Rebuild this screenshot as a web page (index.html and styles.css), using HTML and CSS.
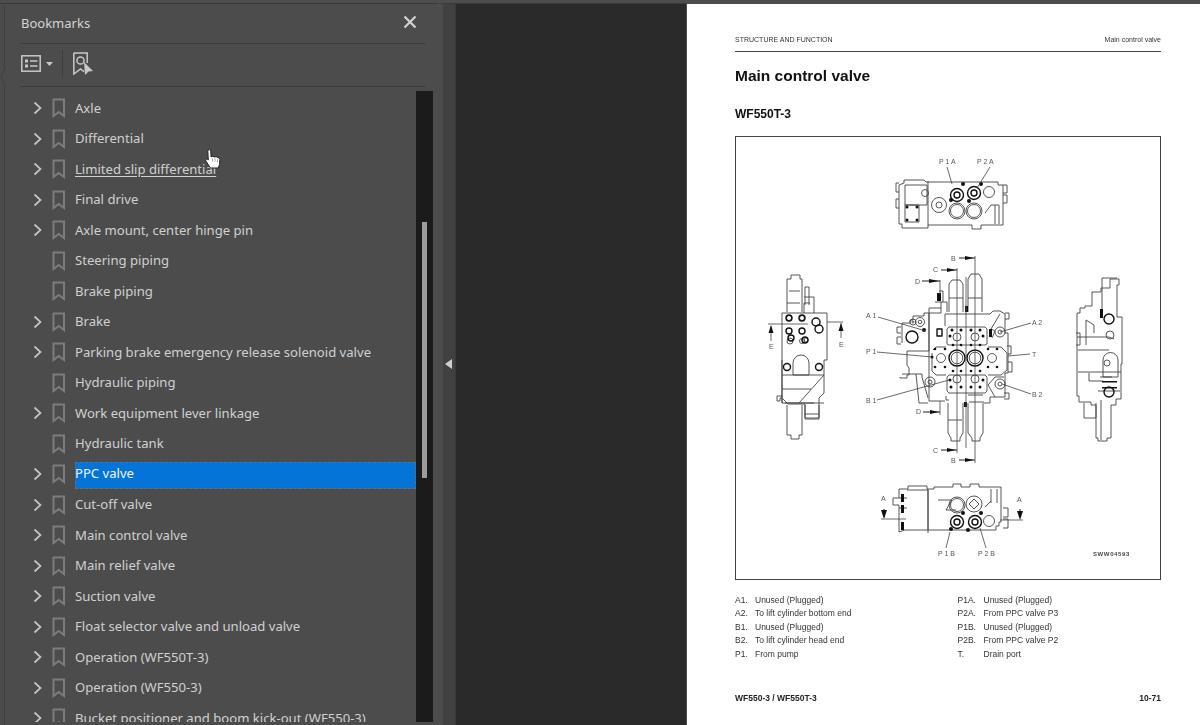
FILE: index.html
```html
<!DOCTYPE html>
<html lang="en">
<head>
<meta charset="utf-8">
<title>Bookmarks</title>
<link rel="stylesheet" href="styles.css">
</head>
<body>
<svg class="defs" width="0" height="0" aria-hidden="true">
  <symbol id="chev" viewBox="0 0 12 14"><path d="M2.500 1.500 8.500 7l-6 5.500" fill="none" stroke="#c4c4c4" stroke-width="1.700"/></symbol>
  <symbol id="mark" viewBox="0 0 14 20"><path d="M1.500 1.500h10.500v16.500L6.750 14 1.500 18Z" fill="none" stroke="#7c7c7c" stroke-width="2"/></symbol>
</svg>
<div class="app">
  <div class="edge"><svg class="notch" viewBox="0 0 6 20" width="6" height="20"><path d="M5.500 0 1 10l4.500 10" fill="#4b4b4b" stroke="#404040"/></svg></div>
  <aside class="panel">
    <header class="panel-head">
      <h1 class="panel-title">Bookmarks</h1>
      <svg class="close" viewBox="0 0 14 14" width="14" height="14"><path d="M1.500 1.500 12.500 12.500M12.500 1.500 1.500 12.500" stroke="#d2d2d2" stroke-width="2.200"/></svg>
    </header>
    <div class="toolbar">
      <svg class="tool-list" viewBox="0 0 20 17" width="20" height="17"><rect x=".8" y=".8" width="18.400" height="15.400" fill="none" stroke="#c8c8c8" stroke-width="1.500"/><rect x="4" y="4.500" width="3" height="3" fill="#c8c8c8"/><rect x="4" y="9.500" width="3" height="3" fill="#c8c8c8"/><path d="M9 6h7.500M9 11h7.500" stroke="#c8c8c8" stroke-width="1.500"/></svg>
      <svg class="caret" viewBox="0 0 7 4" width="7" height="4"><path d="M0 0h7L3.500 4Z" fill="#c8c8c8"/></svg>
      <span class="tool-sep"></span>
      <svg class="tool-find" viewBox="0 0 21 23" width="21" height="23"><path d="M1.800 1h13.400v10M1.800 1v21l6.700-5 3.500 2.600" fill="none" stroke="#c8c8c8" stroke-width="1.500"/><circle cx="8.500" cy="8.500" r="3.600" fill="none" stroke="#c8c8c8" stroke-width="1.500"/><path d="M12 10 21 19l-4.500.5L13 23Z" fill="#c8c8c8"/></svg>
    </div>
    <div class="tree-wrap">
      <ul class="tree">
        <li class="row"><svg class="chev"><use href="#chev"/></svg><svg class="mark"><use href="#mark"/></svg><span class="label">Axle</span></li>
        <li class="row"><svg class="chev"><use href="#chev"/></svg><svg class="mark"><use href="#mark"/></svg><span class="label">Differential</span></li>
        <li class="row"><svg class="chev"><use href="#chev"/></svg><svg class="mark"><use href="#mark"/></svg><span class="label underlined">Limited slip differential</span></li>
        <li class="row"><svg class="chev"><use href="#chev"/></svg><svg class="mark"><use href="#mark"/></svg><span class="label">Final drive</span></li>
        <li class="row"><svg class="chev"><use href="#chev"/></svg><svg class="mark"><use href="#mark"/></svg><span class="label">Axle mount, center hinge pin</span></li>
        <li class="row leaf"><svg class="mark"><use href="#mark"/></svg><span class="label">Steering piping</span></li>
        <li class="row leaf"><svg class="mark"><use href="#mark"/></svg><span class="label">Brake piping</span></li>
        <li class="row"><svg class="chev"><use href="#chev"/></svg><svg class="mark"><use href="#mark"/></svg><span class="label">Brake</span></li>
        <li class="row"><svg class="chev"><use href="#chev"/></svg><svg class="mark"><use href="#mark"/></svg><span class="label">Parking brake emergency release solenoid valve</span></li>
        <li class="row leaf"><svg class="mark"><use href="#mark"/></svg><span class="label">Hydraulic piping</span></li>
        <li class="row"><svg class="chev"><use href="#chev"/></svg><svg class="mark"><use href="#mark"/></svg><span class="label">Work equipment lever linkage</span></li>
        <li class="row leaf"><svg class="mark"><use href="#mark"/></svg><span class="label">Hydraulic tank</span></li>
        <li class="row"><svg class="chev"><use href="#chev"/></svg><svg class="mark"><use href="#mark"/></svg><span class="label selected">PPC valve</span></li>
        <li class="row"><svg class="chev"><use href="#chev"/></svg><svg class="mark"><use href="#mark"/></svg><span class="label">Cut-off valve</span></li>
        <li class="row"><svg class="chev"><use href="#chev"/></svg><svg class="mark"><use href="#mark"/></svg><span class="label">Main control valve</span></li>
        <li class="row"><svg class="chev"><use href="#chev"/></svg><svg class="mark"><use href="#mark"/></svg><span class="label">Main relief valve</span></li>
        <li class="row"><svg class="chev"><use href="#chev"/></svg><svg class="mark"><use href="#mark"/></svg><span class="label">Suction valve</span></li>
        <li class="row"><svg class="chev"><use href="#chev"/></svg><svg class="mark"><use href="#mark"/></svg><span class="label">Float selector valve and unload valve</span></li>
        <li class="row"><svg class="chev"><use href="#chev"/></svg><svg class="mark"><use href="#mark"/></svg><span class="label">Operation (WF550T-3)</span></li>
        <li class="row"><svg class="chev"><use href="#chev"/></svg><svg class="mark"><use href="#mark"/></svg><span class="label">Operation (WF550-3)</span></li>
        <li class="row"><svg class="chev"><use href="#chev"/></svg><svg class="mark"><use href="#mark"/></svg><span class="label">Bucket positioner and boom kick-out (WF550-3)</span></li>
      </ul>
      <div class="scrollbar"><div class="thumb"></div></div>
      <svg class="cursor" viewBox="0 0 16 20" width="16" height="20"><path d="M2.800 1.500c.8-1 2.700-1 3 .4l.2 6 1.800-.6 1.700.7 1.600-.3 1.500.9 1.500.2.800 1.700-.4 5-1.300 3.500H5.500L.8 12c-.7-1.200.6-2.600 1.800-1.700l.7.6Z" fill="#fff" stroke="#222" stroke-width="1"/><path d="M7.500 9.500v3M10 9.500v3M12.500 10v3" stroke="#888" stroke-width=".7"/></svg>
    </div>
  </aside>
  <div class="handle"><svg viewBox="0 0 7 10" width="7" height="10"><path d="M7 0v10L0 5Z" fill="#cfcfcf"/></svg></div>
  <div class="gutter"></div>
  <main class="page">
    <div class="page-head"><span>STRUCTURE AND FUNCTION</span><span>Main control valve</span></div>
    <h2 class="page-title">Main control valve</h2>
    <h3 class="page-sub">WF550T-3</h3>
    <div class="figure">
      <svg class="drawing" viewBox="736 137 424 442" width="424" height="442">
        <!-- top view -->
        <g class="ln">
          <path d="M899 185v39h3v4h26v-3h44v4h9v-4h22v-40h-5v-3h-72l-2-2h-20v3Z"/>
          <path d="M928 181v44M905 185h22v20h-22ZM905 205h14v17h-14ZM899 183h-3v9h3M899 199h-3v9h3M1003 185h4v8h-4M1003 195h4v8h-4"/>
          <circle cx="925" cy="193" r="3.500"/><circle cx="939" cy="205" r="7.500"/><circle cx="939" cy="205" r="3"/>
          <circle cx="974" cy="211" r="8"/><circle cx="974" cy="211" r="6.500"/><circle cx="957" cy="211" r="8"/><circle cx="957" cy="211" r="6.500"/>
          <circle cx="989" cy="192" r="5.500"/><path d="M991 205h8v19M995 205v19M985 213l6-8"/>
        </g>
        <g class="hv">
          <circle cx="957" cy="195" r="6.500"/><circle cx="957" cy="195" r="3"/><circle cx="974" cy="193" r="6.500"/><circle cx="974" cy="193" r="3"/>
        </g>
        <g class="dk">
          <circle cx="907" cy="207" r="1.500"/><circle cx="917" cy="207" r="1.500"/><circle cx="907" cy="220" r="1.500"/><circle cx="917" cy="220" r="1.500"/>
          <circle cx="963" cy="184" r="2"/><circle cx="981" cy="184" r="2"/><circle cx="951" cy="200" r="2"/><circle cx="969" cy="201" r="2"/>
        </g>
        <g class="thin"><path d="M947 167 952 184M990 167 977 188"/></g>
        <text class="lb" x="939" y="164">P 1 A</text><text class="lb" x="977" y="164">P 2 A</text>

        <!-- bottom view -->
        <g class="ln">
          <path d="M899 532v-27h-6v-7h6v-9h9v-3h19v3h7v-2h19v-3h8v3h9v-3h9v3h22v35h-2v4h-3v4H905Z"/>
          <path d="M928 489v44M907 490h21v40M899 498h8M899 508h8M1003 508h5v9h-5M1003 519h5v9h-5M938 500h14l-6 10h10"/>
          <circle cx="957" cy="505" r="8"/><circle cx="957" cy="505" r="6.500"/><circle cx="974" cy="504" r="8"/><path d="M974 499l5 5-5 5-5-5Z"/>
          <circle cx="989" cy="521" r="5.500"/><path d="M991 489v14M997 489v14M985 507l6-6"/>
        </g>
        <g class="hv">
          <circle cx="957" cy="522" r="6.500"/><circle cx="957" cy="522" r="3"/><circle cx="975" cy="522" r="6.500"/><circle cx="975" cy="522" r="3"/>
        </g>
        <g class="dk">
          <circle cx="963" cy="513" r="2"/><circle cx="981" cy="513" r="2"/><circle cx="951" cy="529" r="2"/><circle cx="968" cy="530" r="2"/>
          <rect x="901" y="494" width="3" height="8"/><rect x="901" y="505" width="3" height="8"/><rect x="901" y="522" width="3" height="8"/>
        </g>
        <g class="thin"><path d="M881 519h25M1000 520h23M946 548 950 532M986 548 980 528"/></g>
        <path class="ar" d="M884 509v8M1020 509v8"/><path class="fillar" d="M881 510h6l-3 9ZM1017 511h6l-3 9Z"/>
        <text class="lb" x="881" y="501">A</text><text class="lb" x="1017" y="502">A</text>
        <text class="lb" x="938" y="556">P 1 B</text><text class="lb" x="978" y="556">P 2 B</text>
        <text class="code" x="1093" y="556">SWW04593</text>

        <!-- left view -->
        <g class="ln">
          <path d="M782 313h45v47h-3v33l-5 5v20h-14v-14h-17l-6-6h-2v3h-3v-5h5v0h-1l1 0M782 313v90M782 360v43h42"/>
          <path d="M787 312v-33h4v-4h9v4h2v33M789 291h11M787 303h13M804 313v-10h6M805 305v-18h4v18M814 313v-16M804 297h10"/>
          <path d="M787 405v30h4v4h8v-4h3v-30M785 403h29M805 405v14h14v-14M805 414h14M782 375h42M782 389h29M824 375l-25 28"/>
          <circle cx="789" cy="318" r="2.500"/><circle cx="802" cy="318" r="2.500"/><circle cx="790" cy="341" r="3"/><circle cx="802" cy="341" r="2.500"/><circle cx="806" cy="340" r="2"/>
          <path d="M793 363a8 8 0 0 1 16 0v12h-16Z"/>
        </g>
        <g class="hv">
          <circle cx="789" cy="318" r="3"/><circle cx="802" cy="318" r="3"/><circle cx="816" cy="322" r="4"/><circle cx="819" cy="329" r="4"/>
          <circle cx="789" cy="331" r="3"/><circle cx="802" cy="331" r="3"/><circle cx="791" cy="338" r="3"/><circle cx="805" cy="340" r="3"/>
          <circle cx="787" cy="367" r="3.500"/><circle cx="819" cy="367" r="3.500"/>
        </g>
        <g class="thin"><path d="M768 324h40M838 322h-11M843 322h-5M771 326v15M841 323v15"/></g>
        <path class="fillar" d="M768.500 333h5l-2.500-8ZM838.500 331h5l-2.500-8Z"/>
        <text class="lb" x="769" y="349">E</text><text class="lb" x="839" y="347">E</text>

        <!-- right view -->
        <g class="ln">
          <path d="M1077 313h3v-5h5v-2h7v-14h9v-4h9v-9h9v6h-2v32h5v47h-1v35h-5v6h-5v33h-4v3h-9v-3h-2v-33h-5v-3h-12v-6h-2Z"/>
          <path d="M1102 278h15M1102 278v32M1076 333h4v12h-4M1077 337h32l5 2M1078 372h43M1078 350h31M1086 345v-25l8 5v8M1084 403v15h12v-15"/>
          <path d="M1101 400v40M1112 377h-12M1098 391h22M1089 373v8h14M1103 360a7 7 0 0 1 15 0v17h-15Z"/>
          <circle cx="1107" cy="363" r="3"/><circle cx="1110" cy="335" r="4"/>
        </g>
        <g class="hv">
          <circle cx="1109" cy="319" r="5"/><circle cx="1109" cy="392" r="5"/>
        </g>
        <g class="dk"><rect x="1102" y="381" width="15" height="1.500"/><rect x="1102" y="387" width="15" height="1.500"/><rect x="1100" y="309" width="3" height="9"/></g>

        <!-- centre view -->
        <g class="ln">
          <path d="M902 343v-20h8v-3h3v-4h11v-3h5v38h-22v14l2 3v7h-2v3h-7v-1"/>
          <path d="M901 327h-4v6h4M901 337h-4v7h4M902 374h20v3l6 21M916 374l3 29M919 403h9M929 313v88M941 302v11h-12v-5h12M935 302h12v10M939 291h4v11"/>
          <path d="M949 312v-28l3-4h8l3 4v28M949 298h14M968 312v-33l3-5h8l3 5v33M968 298h14M945 314h45l3-3h7l5 3v19h3v40h-3v24h-15v6h-6M945 314v12"/>
          <path d="M947 329l2-2h36l2 2v15l-2 1h-36l-2-1ZM947 377l2-2h36l2 2v14l-2 2h-36l-2-2Z"/>
          <path d="M933 350l3-3h10M988 347h13l6 6v17l-6 5h-13M946 375h-10l-4-4v-18M1007 346h4v8h-3M1008 362h4v10h-4M1005 313h4v6h-4M1004 393h5v6h-5M1000 314l-9 15 4 2-3 7M995 397l-7-12 7-8h9"/>
          <path d="M948 403v30l3 5v3h9v-3l3-5v-30M948 420h14M968 403v30l4 5v3h8v-3l3-5v-30M968 395h15M969 402h15M946 396v4h3M929 401h16"/>
          <circle cx="957" cy="337" r="4"/><circle cx="975" cy="337" r="4"/><circle cx="941" cy="358" r="4.500"/><circle cx="992" cy="358" r="4.500"/><circle cx="957" cy="379" r="4"/><circle cx="975" cy="379" r="4"/>
          <circle cx="913" cy="322" r="3"/><circle cx="913" cy="322" r="1"/><circle cx="920" cy="322" r="4.500"/><circle cx="920" cy="322" r="1.800"/><circle cx="930" cy="382" r="5"/><circle cx="930" cy="382" r="2"/><circle cx="1000" cy="384" r="5"/><circle cx="1000" cy="384" r="2"/><circle cx="1000" cy="332" r="5"/><circle cx="1000" cy="332" r="2"/>
        </g>
        <g class="hv">
          <circle cx="957" cy="358" r="8"/><circle cx="975" cy="358" r="8"/><circle cx="912" cy="337" r="6"/><rect x="937" y="329" width="5" height="7" fill="none"/>
        </g>
        <g class="ln white"><circle cx="957" cy="358" r="5.800"/><circle cx="975" cy="358" r="5.800"/></g>
        <g class="dk">
          <circle cx="952" cy="330" r="1.500"/><circle cx="961" cy="330" r="1.500"/><circle cx="971" cy="330" r="1.500"/><circle cx="980" cy="330" r="1.500"/>
          <circle cx="945" cy="349" r="1.300"/><circle cx="935" cy="349" r="1.300"/><circle cx="953" cy="345" r="1.300"/><circle cx="961" cy="345" r="1.300"/><circle cx="971" cy="345" r="1.300"/><circle cx="980" cy="345" r="1.300"/><circle cx="988" cy="349" r="1.300"/><circle cx="997" cy="349" r="1.300"/>
          <circle cx="935" cy="367" r="1.300"/><circle cx="945" cy="367" r="1.300"/><circle cx="953" cy="371" r="1.300"/><circle cx="961" cy="371" r="1.300"/><circle cx="971" cy="371" r="1.300"/><circle cx="980" cy="371" r="1.300"/><circle cx="988" cy="367" r="1.300"/><circle cx="997" cy="367" r="1.300"/>
          <circle cx="951" cy="387" r="1.500"/><circle cx="961" cy="387" r="1.500"/><circle cx="971" cy="387" r="1.500"/><circle cx="980" cy="387" r="1.500"/>
          <circle cx="924" cy="330" r="2"/><circle cx="950" cy="336" r="1.500"/><circle cx="950" cy="380" r="1.500"/><circle cx="983" cy="336" r="1.500"/><circle cx="983" cy="380" r="1.500"/><circle cx="932" cy="357" r="1.500"/><rect x="937" y="293" width="4" height="8"/><rect x="965" y="306" width="3" height="6"/><rect x="964" y="402" width="3" height="5"/><rect x="989" y="329" width="3" height="8"/>
        </g>
        <g class="thin">
          <path d="M975 256v207M957 268v185M966 277v171M940 280v14M940 401v14"/>
          <path d="M878 317 926 331M877 352 932 357M877 400 949 380M1031 323 1000 332M1030 354 1008 356M1031 394 1002 384"/>
        </g>
        <g class="ar"><path d="M959 258h16M941 270h16M922 281h18M923 412h17M941 450h16M959 460h16"/></g>
        <path class="fillar" d="M965 256v4l9-2ZM947 268v4l9-2ZM929 279v4l10-2ZM930 410v4l9-2ZM947 448v4l9-2ZM965 458v4l9-2Z"/>
        <text class="lb" x="951" y="261">B</text><text class="lb" x="933" y="272">C</text><text class="lb" x="915" y="284">D</text><text class="lb" x="916" y="414">D</text><text class="lb" x="933" y="453">C</text><text class="lb" x="951" y="463">B</text>
        <text class="lb" x="866" y="318">A 1</text><text class="lb" x="866" y="354">P 1</text><text class="lb" x="866" y="403">B 1</text><text class="lb" x="1032" y="325">A 2</text><text class="lb" x="1032" y="357">T</text><text class="lb" x="1032" y="397">B 2</text>
      </svg>
    </div>
    <div class="legend">
      <dl class="legend-col">
        <div class="entry"><dt>A1.</dt><dd>Unused (Plugged)</dd></div>
        <div class="entry"><dt>A2.</dt><dd>To lift cylinder bottom end</dd></div>
        <div class="entry"><dt>B1.</dt><dd>Unused (Plugged)</dd></div>
        <div class="entry"><dt>B2.</dt><dd>To lift cylinder head end</dd></div>
        <div class="entry"><dt>P1.</dt><dd>From pump</dd></div>
      </dl>
      <dl class="legend-col right">
        <div class="entry"><dt>P1A.</dt><dd>Unused (Plugged)</dd></div>
        <div class="entry"><dt>P2A.</dt><dd>From PPC valve P3</dd></div>
        <div class="entry"><dt>P1B.</dt><dd>Unused (Plugged)</dd></div>
        <div class="entry"><dt>P2B.</dt><dd>From PPC valve P2</dd></div>
        <div class="entry"><dt>T.</dt><dd>Drain port</dd></div>
      </dl>
    </div>
    <footer class="page-foot"><span>WF550-3 / WF550T-3</span><span>10-71</span></footer>
  </main>
</div>
</body>
</html>
```
FILE: styles.css
```css
* { box-sizing: border-box; }
html, body { margin: 0; height: 100%; overflow: hidden; }
body { background: #4d4d4d; font-family: "Noto Sans", "Open Sans", sans-serif; }
.defs { position: absolute; }

.app { display: flex; height: 725px; padding-top: 3px; }
.app > * { border-top: 1px solid #3a3a3a; }
.edge { width: 5px; flex: none; background: #4b4b4b; border-right: 1px solid #404040; position: relative; }
.notch { position: absolute; left: 0; top: 63px; }

.panel { width: 433px; flex: none; background: #4c4c4c; display: flex; flex-direction: column; color: #d2d2d2; }
.panel-head { height: 40px; margin: 0 12px 0 15px; display: flex; align-items: center; justify-content: space-between; border-bottom: 1px solid #3d3d3d; padding: 0 9px 0 1px; flex: none; }
.panel-title { margin: 0; font-size: 13px; font-weight: 400; color: #d4d4d4; line-height: 1; }
.close { margin-top: -4px; }
.toolbar { height: 43px; margin: 0 12px 0 15px; display: flex; align-items: center; border-bottom: 1px solid #3d3d3d; flex: none; padding: 0 0 3px 1px; }
.caret { margin-left: 5px; }
.tool-sep { width: 1px; height: 27px; background: #3d3d3d; margin: 0 9px 0 9px; }

.tree-wrap { flex: 1; position: relative; display: flex; min-height: 0; overflow: hidden; padding: 4px 5px 3px 0; }
.tree { list-style: none; margin: 2.200px 0 0; padding: 0; width: 411px; flex: none; overflow: hidden; }
.row { height: 30.500px; display: flex; align-items: center; font-size: 13.100px; padding-left: 27px; white-space: nowrap; }
.row.leaf { padding-left: 46.500px; }
.chev { width: 12px; height: 14px; flex: none; margin-right: 7.500px; }
.mark { width: 14px; height: 20px; flex: none; margin-right: 9.500px; }
.label { color: #d0d0d0; line-height: 19px; }
.underlined { text-decoration: underline; text-underline-offset: 2px; }
.selected { flex: 1; height: 27px; margin-top: 3px; line-height: 23px; background: #0474d8; color: #f2f6fa; outline: 1px dashed #5f6f7c; outline-offset: -1px; }

.scrollbar { width: 17px; flex: none; background: #1b1b1b; position: relative; }
.thumb { position: absolute; left: 6px; top: 131px; width: 5px; height: 256px; background: #9c9c9c; }
.cursor { position: absolute; left: 200px; top: 62px; }

.handle { width: 18px; flex: none; background: #414141; border-left: 5px solid #4c4c4c; border-right: 1px solid #383838; display: flex; align-items: center; justify-content: center; padding: 0 2px 2px 0; }
.gutter { width: 231px; flex: none; background: #2a2a2a; border-right: 1px solid #4e4e4e; }

.page { flex: 1; min-width: 0; background: #fff; padding: 32px 39px 0 48px; color: #222; font-family: "Liberation Sans", Arial, sans-serif; border-top: 0; margin-top: 1px; filter: blur(.4px); }
.page-head { display: flex; justify-content: space-between; font-size: 7px; line-height: 8px; color: #333; border-bottom: 1.500px solid #444; padding-bottom: 7px; }
.page-title { margin: 14px 0 0; font-size: 15.500px; line-height: 20px; font-weight: 700; color: #111; }
.page-sub { margin: 21px 0 0; font-size: 12px; line-height: 14px; font-weight: 700; color: #111; }
.figure { margin-top: 15px; height: 444px; width: 426px; border: 1px solid #444; }
.drawing { display: block; }
.ln, .hv, .thin { fill: none; stroke-linejoin: round; }
.ln { stroke: #444; stroke-width: .9; }
.white { fill: #fff; }
.hv { stroke: #111; stroke-width: 1.400; }
.dk { fill: #111; }
.thin { stroke: #444; stroke-width: .8; }
.ar { stroke: #222; stroke-width: 1; fill: none; }
.fillar { fill: #111; }
.lb { font-size: 7px; fill: #555; }
.code { font-size: 6px; fill: #444; letter-spacing: .6px; font-weight: 700; }

.legend { display: flex; margin-top: 13.500px; font-size: 8.500px; line-height: 13.500px; color: #333; }
.legend-col { margin: 0; width: 222.500px; flex: none; }
.legend-col.right { flex: 1; width: auto; }
.entry { display: flex; height: 13.500px; }
.entry dt { width: 20px; flex: none; }
.entry dd { margin: 0; }
.right dt { width: 26px; }
.page-foot { display: flex; justify-content: space-between; margin-top: 31.500px; font-size: 8.500px; line-height: 11px; font-weight: 700; color: #222; }
```
